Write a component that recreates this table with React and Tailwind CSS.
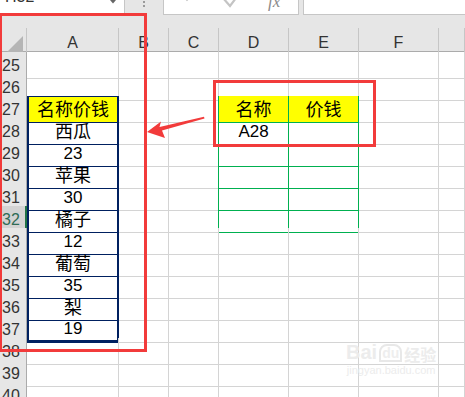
import React from "react";

const font = { fontFamily: '"Liberation Sans", "Noto Sans CJK SC", sans-serif' };

const colHeads = ["A", "B", "C", "D", "E", "F", ""];
const rows = [25, 26, 27, 28, 29, 30, 31, 32, 33, 34, 35, 36, 37, 38, 39, 40];

const colA = {
  27: "名称价钱",
  28: "西瓜",
  29: "23",
  30: "苹果",
  31: "30",
  32: "橘子",
  33: "12",
  34: "葡萄",
  35: "35",
  36: "梨",
  37: "19",
};

const base = "flex items-center justify-center pt-[2px] border-r border-b border-[#d4d4d4] overflow-hidden whitespace-nowrap text-black";

function cellClass(r, c) {
  if (c === 0) {
    if (r === 26) return `${base} border-b-[#002060]`;
    if (r === 27) return `${base} bg-[#ffff00] border-t border-t-[#002060] border-l-2 border-l-[#002060] border-r-2 border-r-[#002060] border-b-[#002060]`;
    if (r === 37) return `${base} border-l-2 border-l-[#002060] border-r-2 border-r-[#002060] border-b-[3px] border-b-[#002060]`;
    if (r > 27 && r < 37) return `${base} border-l-2 border-l-[#002060] border-r-2 border-r-[#002060] border-b-[#002060]`;
  }
  if (c === 2 && r >= 27 && r <= 32) return `${base} border-r-[#00b050]`;
  if ((c === 3 || c === 4) && r === 26) return `${base} border-b-[#00b050]`;
  if ((c === 3 || c === 4) && r === 27) return `${base} bg-[#ffff00] border-r-[#00b050] border-b-[#00b050]`;
  if ((c === 3 || c === 4) && r > 27 && r <= 32) return `${base} border-r-[#00b050] border-b-[#00b050]`;
  return base;
}

function cellText(r, c) {
  if (c === 0) return colA[r] || "";
  if (c === 3 && r === 27) return "名称";
  if (c === 4 && r === 27) return "价钱";
  if (c === 3 && r === 28) return "A28";
  return "";
}

const isCJK = (s) => /[\u4e00-\u9fff]/.test(s);

function FormulaBar() {
  return (
    <div className="flex h-[15px] bg-[#e6e6e6] overflow-hidden">
      <div className="relative w-[125px] shrink-0 bg-white border-r border-b border-[#c6c6c6] overflow-hidden">
        <div className="-mt-[13px] ml-[5px] text-[16px] leading-[20px] text-[#333]">H32</div>
        <svg className="absolute right-[8px] top-0" width="6" height="4" viewBox="0 0 6 4">
          <polygon points="0,0 6,0 3,3.5" fill="#666" />
        </svg>
      </div>
      <div className="w-[38px] shrink-0 flex flex-col items-center pt-[1px] gap-[2px]">
        <div className="w-[2px] h-[2px] bg-[#9a9a9a]" />
        <div className="w-[2px] h-[2px] bg-[#9a9a9a]" />
      </div>
      <div className="w-[136px] shrink-0 bg-white border-x border-b border-[#c6c6c6] overflow-hidden relative">
        <svg className="absolute left-0 top-0" width="136" height="15" viewBox="0 0 136 15">
          <path d="M15,-8 L23,0 L31,-8" fill="none" stroke="#c4c4c4" strokeWidth="1.8" />
          <path d="M59,-2 L66,6 L75,-6" fill="none" stroke="#c4c4c4" strokeWidth="2.2" />
        </svg>
        <div className="absolute left-[104px] -top-[11px] text-[17px] italic text-[#8a8a8a]" style={{ fontFamily: '"Liberation Serif", serif' }}>
          fx
        </div>
      </div>
      <div className="w-[4px] shrink-0" />
      <div className="flex-1 bg-white border-l border-b border-[#c6c6c6]" />
    </div>
  );
}

export default function App() {
  return (
    <div className="relative w-[465px] h-[397px] overflow-hidden bg-white" style={font}>
      <FormulaBar />
      <div className="h-[13px] bg-[#e6e6e6]" />

      <div className="grid grid-cols-[27px_92px_50px_50px_70px_70px_80px_1fr] h-[24px] bg-[#e6e6e6] border-b border-[#ababab]">
        <div className="flex items-end justify-end pr-[3px] pb-[3px] border-r border-[#c6c6c6]">
          <svg width="16" height="16" viewBox="0 0 16 16">
            <polygon points="16,0 16,16 0,16" fill="#b5b5b5" />
          </svg>
        </div>
        {colHeads.map((h, i) => (
          <div key={i} className="flex items-center justify-center pt-[3px] text-[16px] text-[#333] border-r border-[#c6c6c6]">
            {h}
          </div>
        ))}
      </div>

      {rows.map((r) => (
        <div key={r} className="grid grid-cols-[27px_92px_50px_50px_70px_70px_80px_1fr] h-[22px]">
          {r === 32 ? (
            <div className="flex items-center pl-[2px] pt-[2px] bg-[#d3d3d3] border-r-2 border-[#217346] border-b border-b-[#c6c6c6] text-[16px] text-[#2f6b55]">
              {r}
            </div>
          ) : (
            <div className="flex items-center pl-[2px] pt-[2px] bg-[#e6e6e6] border-r border-b border-[#c6c6c6] border-r-[#ababab] text-[16px] text-[#333]">
              {r}
            </div>
          )}
          {colHeads.map((_, c) => {
            const t = cellText(r, c);
            return (
              <div key={c} className={`${cellClass(r, c)} ${isCJK(t) ? "text-[18px]" : "text-[17px]"}`}>
                {t}
              </div>
            );
          })}
        </div>
      ))}

      {/* annotation overlays */}
      <div className="absolute left-[-1px] top-[13px] w-[148px] h-[339px] border-[3px] border-[#f23b3b] pointer-events-none" />
      <div className="absolute left-[213px] top-[80px] w-[163px] h-[67px] border-[3px] border-[#f23b3b] pointer-events-none" />
      <svg className="absolute left-0 top-0 pointer-events-none" width="465" height="397" viewBox="0 0 465 397">
        <polygon points="147,132 161,121.5 159.5,127 204,116.8 204.5,118.6 162,130.5 165,138" fill="#f23b3b" />
      </svg>

      {/* watermark */}
      <div className="absolute left-[346px] top-[342px] flex flex-col items-center pointer-events-none select-none">
        <div className="flex items-end gap-[2px] text-[20px] font-bold leading-none text-[#ececec]">
          <span>Bai</span>
          <span className="rounded-t-[8px] border-2 border-[#e8e8e8] px-[1px] text-[14px] text-[#eeeeee]">du</span>
          <span className="text-[16px]" style={{ fontFamily: '"Noto Sans CJK SC", sans-serif' }}>经验</span>
        </div>
        <div className="mt-[3px] text-[11px] leading-none text-[#ececec]">jingyan.baidu.com</div>
      </div>
    </div>
  );
}
